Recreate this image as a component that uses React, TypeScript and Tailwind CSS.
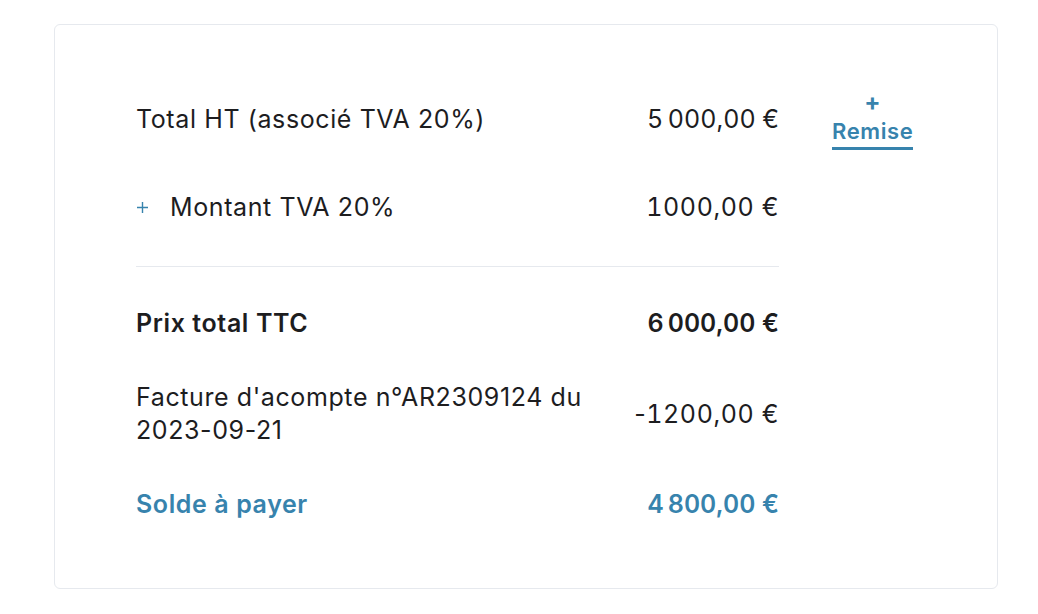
export default function App() {
  return (
    <div className="min-h-[614px] bg-white pt-[24px] pl-[54px]" style={{ fontFamily: "Inter, 'Noto Sans', sans-serif" }}>
      <div className="w-[944px] h-[565px] rounded-md border border-[#e6e9ee] bg-white pl-[81px] pt-[78px]">
        <div className="flex items-start">
          <div className="w-[643px] text-[25px] leading-[33px] tracking-[0.6px] text-[#1d1d1f]">
            <div className="flex items-center justify-between">
              <span>Total HT (associé TVA 20%)</span>
              <span className="whitespace-nowrap tabular-nums">5&#8239;000,00 €</span>
            </div>
            <div className="mt-[55px] flex items-center justify-between">
              <span className="flex items-center">
                <svg className="mr-[22px] ml-[1px]" width="11" height="11" viewBox="0 0 11 11">
                  <path d="M5.5 0v11M0 5.5h11" stroke="#3783ad" strokeWidth="1.4" />
                </svg>
                Montant TVA 20%
              </span>
              <span className="whitespace-nowrap tabular-nums">1000,00 €</span>
            </div>
            <div className="mt-[42px] h-px bg-[#e6e9ee]" />
            <div className="mt-[40px] flex items-center justify-between font-semibold">
              <span>Prix total TTC</span>
              <span className="whitespace-nowrap tabular-nums">6&#8239;000,00 €</span>
            </div>
            <div className="mt-[41px] flex items-center justify-between">
              <span className="w-[480px]">Facture d'acompte n°AR2309124 du 2023-09-21</span>
              <span className="whitespace-nowrap">-<span className="tabular-nums">1200,00 €</span></span>
            </div>
            <div className="mt-[41px] flex items-center justify-between font-semibold text-[#3783ad]">
              <span>Solde à payer</span>
              <span className="whitespace-nowrap tabular-nums">4&#8239;800,00 €</span>
            </div>
          </div>
          <button className="ml-[53px] -mt-[12px] flex flex-col items-center text-[22px] tracking-[0.6px] font-semibold text-[#3783ad]">
            <span className="leading-[22px] text-[24px] font-bold">+</span>
            <span className="mt-[4px] border-b-[3px] border-[#3783ad] leading-[28px] pb-[2px]">Remise</span>
          </button>
        </div>
      </div>
    </div>
  );
}
